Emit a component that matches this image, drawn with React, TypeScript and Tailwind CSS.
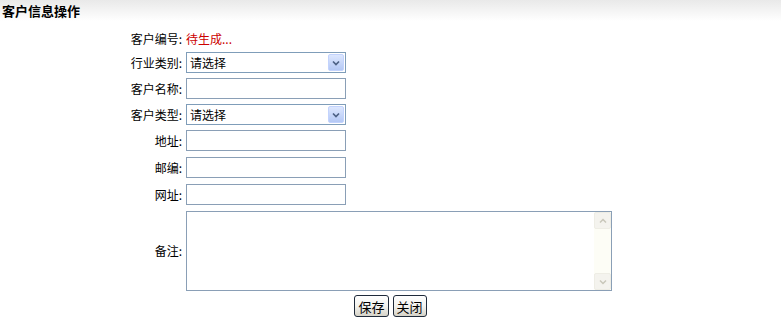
import { ReactNode } from "react";

const font = "font-['SimSun','Noto_Sans_CJK_SC','Noto_Sans',sans-serif]";

function Label({ children }: { children: ReactNode }) {
  return (
    <div className="w-[183px] shrink-0 pr-[1px] text-right text-black">
      {children}:
    </div>
  );
}

function FakeSelect() {
  return (
    <div className="relative flex h-[21px] w-[160px] items-center border border-[#7f9db9] bg-white pl-[3px]">
      <span>请选择</span>
      {/* dropdown button */}
      <div className="absolute right-[1px] top-[1px] flex h-[17px] w-[16px] items-center justify-center rounded-[2px] border border-[#c3d3fd] bg-gradient-to-b from-[#dde7fe] to-[#b4c8f5]">
        <svg width="8" height="6" viewBox="0 0 8 6">
          <path d="M1 1.5 L4 4.5 L7 1.5" fill="none" stroke="#4d6185" strokeWidth="1.7" />
        </svg>
      </div>
    </div>
  );
}

function TextInput() {
  return <div className="h-[21px] w-[160px] border border-[#8a9fb6] bg-white" />;
}

function XpButton({ children }: { children: ReactNode }) {
  return (
    <button className="flex h-[22px] items-center justify-center rounded-[3px] border border-[#1f2a3a] bg-gradient-to-b from-white via-[#f3f3ef] to-[#d6d3c8] px-[3px] text-[13px] leading-none text-black">
      {children}
    </button>
  );
}

export default function App() {
  return (
    <div className={`h-[318px] w-[781px] overflow-hidden bg-white text-[12px] ${font}`}>
      {/* Title bar */}
      <div className="flex h-[21px] items-center bg-gradient-to-b from-[#e9e9e9] to-white pl-[2px]">
        <h1 className="text-[13px] font-bold text-black">客户信息操作</h1>
      </div>

      {/* Form rows */}
      <div className="flex flex-col">
        <div className="mt-[7px] flex h-[22px] items-center">
          <Label>客户编号</Label>
          <span className="pl-[3px] text-[#cc0000]">待生成...</span>
        </div>
        <div className="mt-[2px] flex items-center">
          <Label>行业类别</Label>
          <div className="pl-[3px]">
            <FakeSelect />
          </div>
        </div>
        <div className="mt-[5px] flex items-center">
          <Label>客户名称</Label>
          <div className="pl-[3px]">
            <TextInput />
          </div>
        </div>
        <div className="mt-[5px] flex items-center">
          <Label>客户类型</Label>
          <div className="pl-[3px]">
            <FakeSelect />
          </div>
        </div>
        <div className="mt-[5px] flex items-center">
          <Label>地址</Label>
          <div className="pl-[3px]">
            <TextInput />
          </div>
        </div>
        <div className="mt-[6px] flex items-center">
          <Label>邮编</Label>
          <div className="pl-[3px]">
            <TextInput />
          </div>
        </div>
        <div className="mt-[6px] flex items-center">
          <Label>网址</Label>
          <div className="pl-[3px]">
            <TextInput />
          </div>
        </div>
        <div className="mt-[6px] flex items-center">
          <Label>备注</Label>
          <div className="pl-[3px]">
            {/* textarea with XP scrollbar */}
            <div className="flex h-[80px] w-[426px] border border-[#8a9fb6] bg-white">
              <div className="flex-1" />
              <div className="flex w-[17px] flex-col bg-[#fdfdf6]">
                <div className="flex h-[17px] items-center justify-center rounded-[2px] border border-[#eeede5] bg-[#f4f3ee]">
                  <svg width="8" height="6" viewBox="0 0 8 6">
                    <path d="M1 4.5 L4 1.5 L7 4.5" fill="none" stroke="#c9c7ba" strokeWidth="1.5" />
                  </svg>
                </div>
                <div className="flex-1" />
                <div className="flex h-[17px] items-center justify-center rounded-[2px] border border-[#eeede5] bg-[#f4f3ee]">
                  <svg width="8" height="6" viewBox="0 0 8 6">
                    <path d="M1 1.5 L4 4.5 L7 1.5" fill="none" stroke="#c9c7ba" strokeWidth="1.5" />
                  </svg>
                </div>
              </div>
            </div>
          </div>
        </div>
        <div className="mt-[4px] flex justify-center gap-[4px]">
          <XpButton>保存</XpButton>
          <XpButton>关闭</XpButton>
        </div>
      </div>
    </div>
  );
}
